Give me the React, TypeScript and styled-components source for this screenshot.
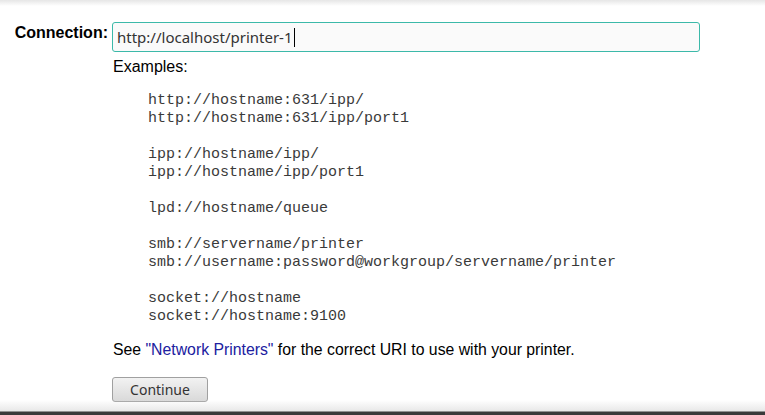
import React from "react";
import styled, { createGlobalStyle } from "styled-components";

const Global = createGlobalStyle`
  html, body { margin: 0; padding: 0; background: #fff; }
  body { font-family: "Liberation Sans", Arial, sans-serif; color: #000; }
`;

const Page = styled.div`
  position: relative;
  width: 765px;
  height: 415px;
  overflow: hidden;
  background: #fff;
  display: flex;
  flex-direction: column;
`;

const TopShade = styled.div`
  height: 6px;
  flex: none;
  background: linear-gradient(to bottom, #e6e6e6, #ffffff);
`;

const Form = styled.div`
  display: grid;
  grid-template-columns: 108px 588px;
  column-gap: 4px;
  padding: 16px 0 0 0;
  flex: 1;
`;

const Label = styled.div`
  font-weight: bold;
  font-size: 16px;
  text-align: right;
  padding-top: 2px;
`;

const Field = styled.div`
  display: flex;
  flex-direction: column;
`;

const Input = styled.div`
  box-sizing: border-box;
  height: 30px;
  border: 1px solid #3cb9a9;
  border-radius: 3px;
  background: #fafafa;
  padding: 0 0 0 4px;
  display: flex;
  align-items: center;
  font-family: "Noto Sans", "Open Sans", sans-serif;
  font-size: 15px;
  color: #333;
`;

const Caret = styled.span`
  display: inline-block;
  width: 1px;
  height: 19px;
  background: #000;
  margin-left: 1px;
`;

const Examples = styled.div`
  font-size: 16px;
  margin: 6px 0 0 1px;
`;

const Pre = styled.pre`
  font-family: "Liberation Mono", "Courier New", monospace;
  font-size: 15px;
  line-height: 18px;
  color: #3a3a3a;
  margin: 16px 0 0 36px;
`;

const Note = styled.p`
  font-size: 15.8px;
  margin: 15px 0 0 1px;
`;

const Link = styled.a`
  color: #2020a0;
  text-decoration: none;
`;

const Button = styled.button`
  margin-top: 18px;
  width: 96px;
  height: 25px;
  box-sizing: border-box;
  border: 1px solid #a0a0a0;
  border-radius: 3px;
  background: linear-gradient(to bottom, #f2f2f2, #d9d9d9);
  font-family: "Noto Sans", "Open Sans", sans-serif;
  font-size: 14px;
  color: #333;
  padding: 0;
`;

const BottomShade = styled.div`
  position: absolute;
  left: 0;
  right: 0;
  bottom: 0;
  height: 15px;
  background: linear-gradient(to bottom, rgba(255,255,255,0) 0px, #e8e8e8 11px, #3a3a3a 12px, #3a3a3a 15px);
`;

const examples = `http://hostname:631/ipp/
http://hostname:631/ipp/port1

ipp://hostname/ipp/
ipp://hostname/ipp/port1

lpd://hostname/queue

smb://servername/printer
smb://username:password@workgroup/servername/printer

socket://hostname
socket://hostname:9100`;

export default function App() {
  return (
    <Page>
      <Global />
      <TopShade />
      <Form>
        <Label>Connection:</Label>
        <Field>
          <Input>
            http://localhost/printer-1
            <Caret />
          </Input>
          <Examples>Examples:</Examples>
          <Pre>{examples}</Pre>
          <Note>
            See <Link href="#">"Network Printers"</Link> for the correct URI to use with your printer.
          </Note>
          <div>
            <Button>Continue</Button>
          </div>
        </Field>
      </Form>
      <BottomShade />
    </Page>
  );
}
